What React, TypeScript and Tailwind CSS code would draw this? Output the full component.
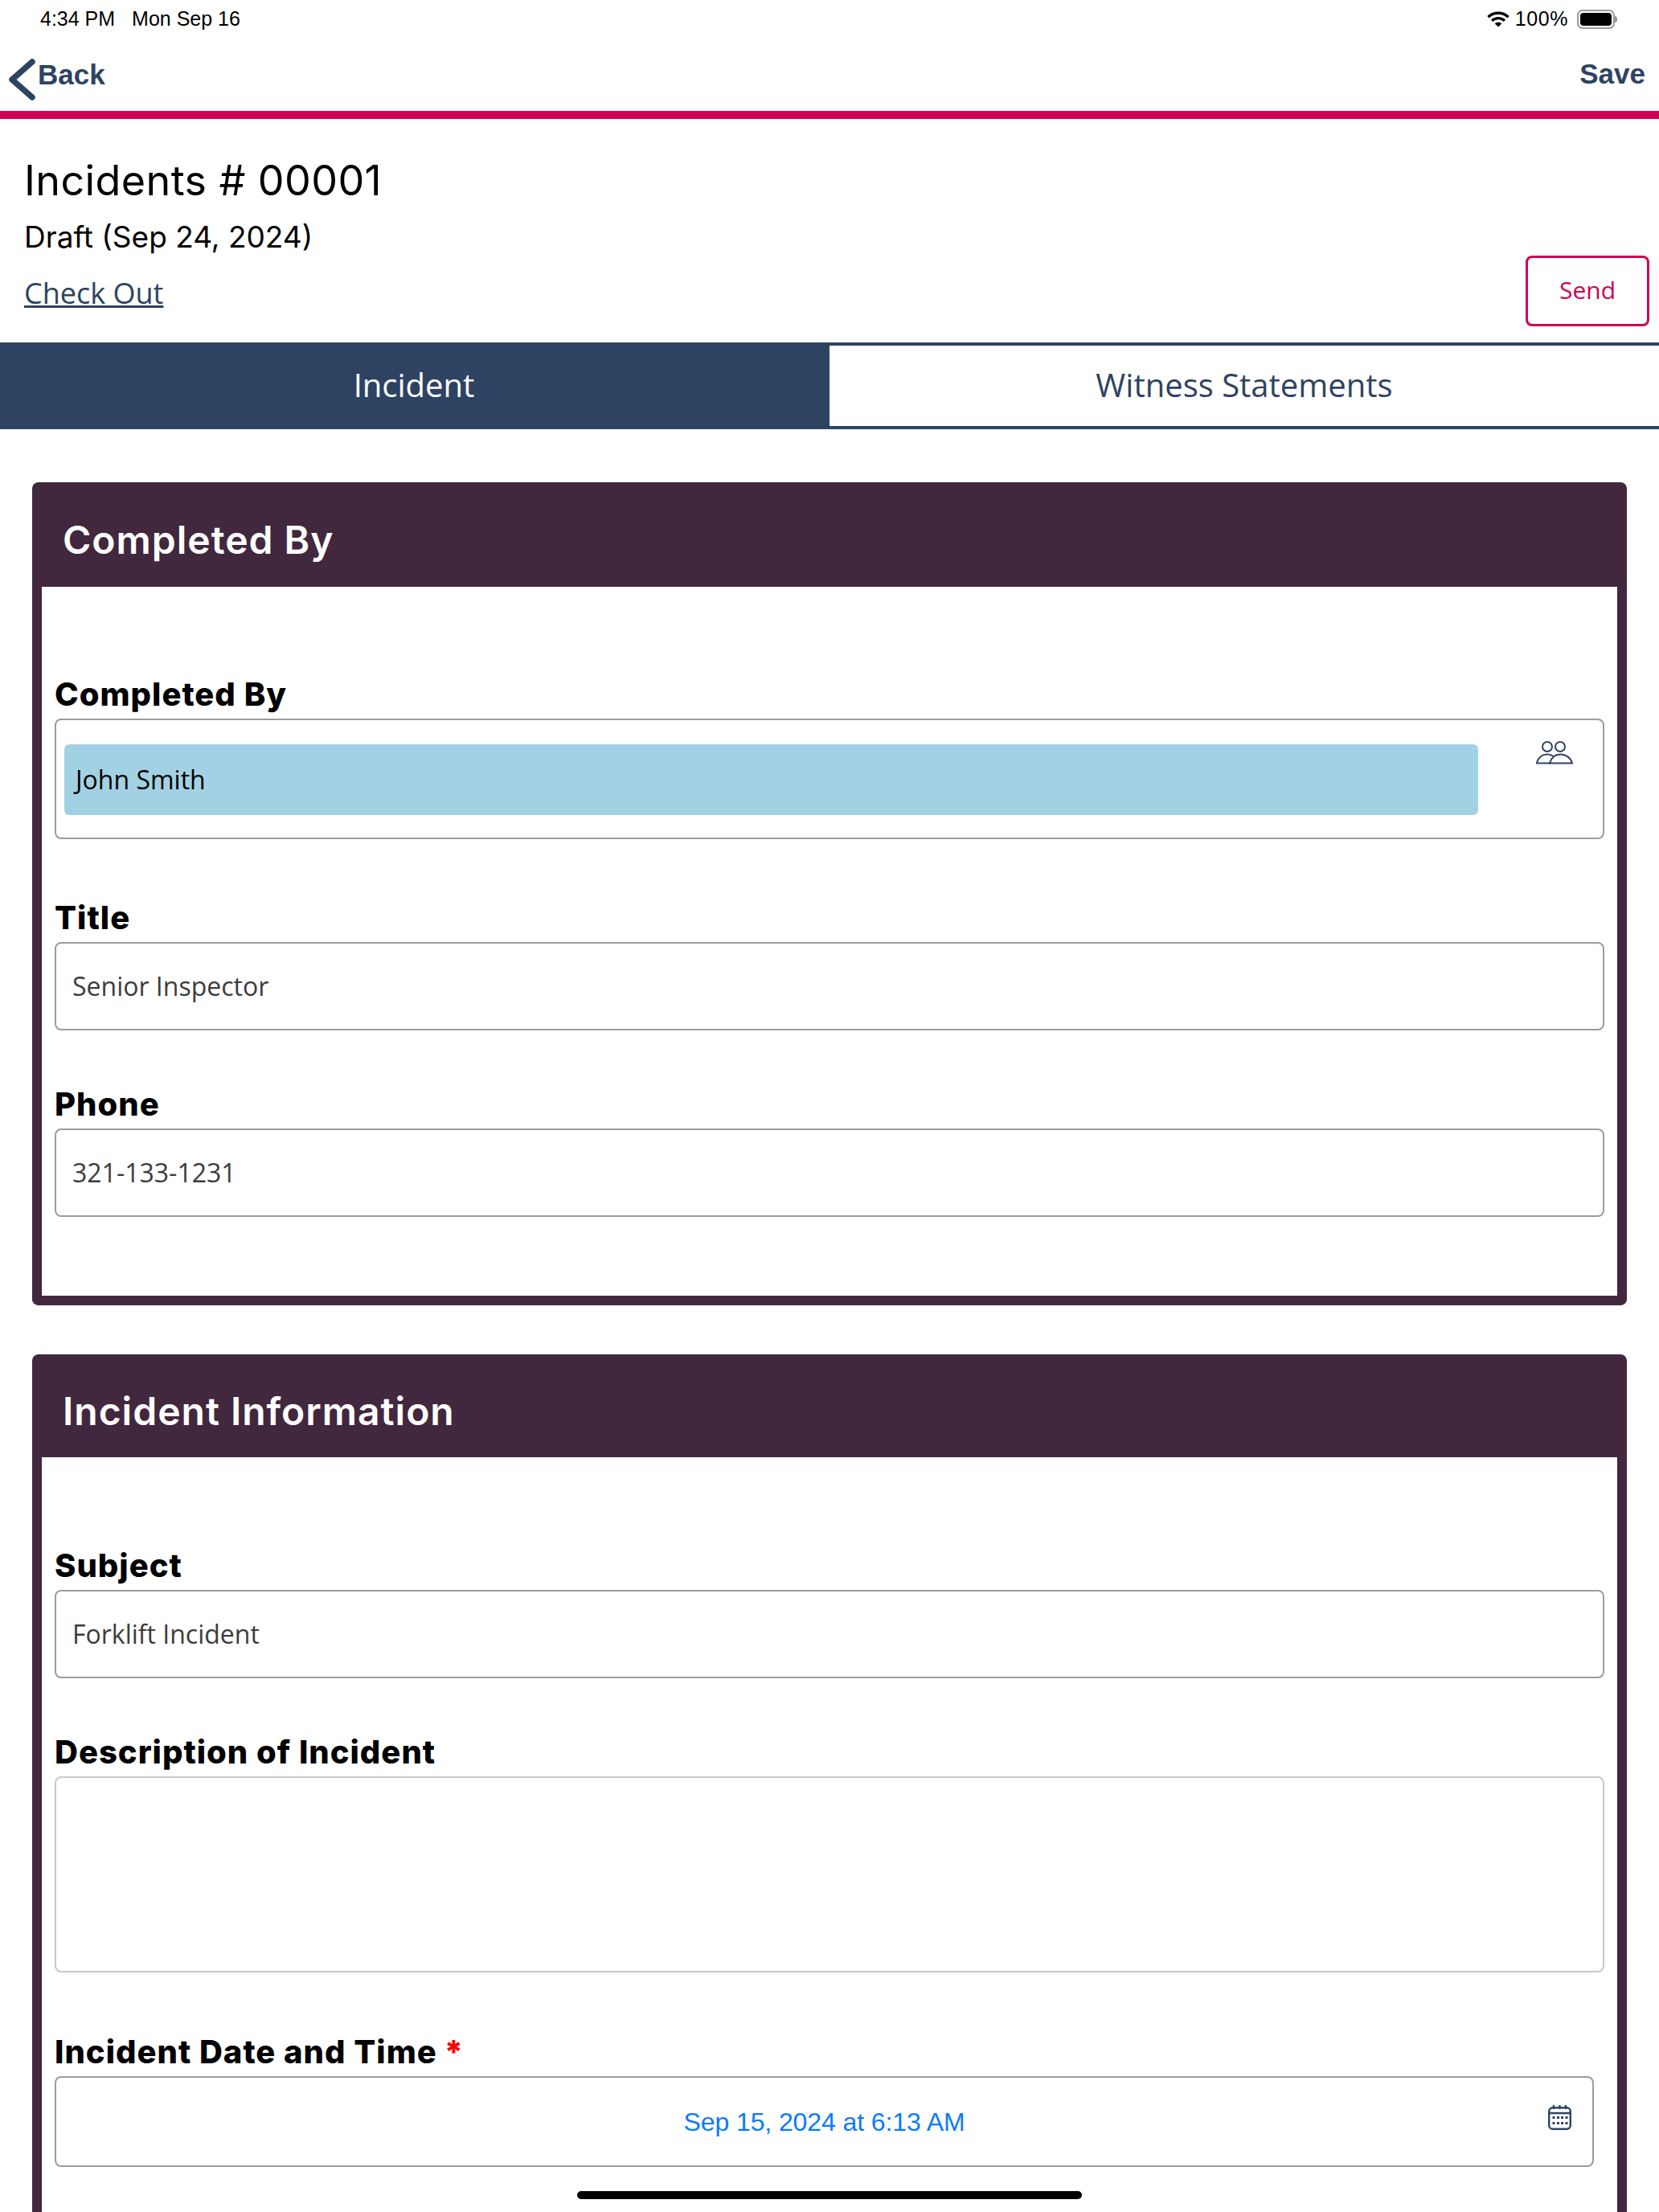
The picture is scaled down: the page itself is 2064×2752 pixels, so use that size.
const heading = "font-['Inter','Noto_Sans',sans-serif]"
const body = "font-['Open_Sans','Noto_Sans',sans-serif]"
const system = "font-['Liberation_Sans','Arial',sans-serif]"

function WifiIcon() {
  return (
    <svg width="28" height="20" viewBox="0 0 28 20" fill="none" stroke="#000" strokeWidth="3.4">
      <path d="M1.5 7.2C8.5 .6 19.5 .6 26.5 7.2" />
      <path d="M6 11.8C10.6 7.6 17.4 7.6 22 11.8" />
      <path d="M14 19.5 9.6 15.3C12 13.2 16 13.2 18.4 15.3Z" fill="#000" stroke="none" />
    </svg>
  )
}

function BatteryIcon() {
  return (
    <div className="flex items-center">
      <div className="w-[47px] h-[24px] rounded-[7px] border-2 border-[#9a9a9a] p-[2px]">
        <div className="w-full h-full rounded-[4px] bg-black" />
      </div>
      <div className="w-[3px] h-[8px] rounded-r-sm bg-[#9a9a9a]" />
    </div>
  )
}

function PeopleIcon() {
  return (
    <svg width="46" height="29" viewBox="0 0 46 29" fill="none" stroke="#2e4362" strokeWidth="2">
      <circle cx="14" cy="7" r="6" />
      <circle cx="30" cy="7" r="6" />
      <path d="M1 27C3 20 8 16.5 14 16.5C17 16.5 19.5 17.3 21.5 19" />
      <path d="M17 27.5C19 20.5 24 16.5 30.5 16.5C37 16.5 43 20.5 45 27.5Z" />
      <path d="M0 27.5H18" />
    </svg>
  )
}

function CalendarIcon() {
  return (
    <svg width="29" height="31" viewBox="0 0 29 31" fill="none" stroke="#2e4362" strokeWidth="2.4">
      <rect x="1.2" y="3.2" width="26.6" height="26.6" rx="4.5" />
      <path d="M1.2 10H27.8M7 0V5M14.5 0V5M22 0V5" />
      <g fill="#2e4362" stroke="none">
        <rect x="5.5" y="14" width="3" height="3" />
        <rect x="11" y="14" width="3" height="3" />
        <rect x="16" y="14" width="3" height="3" />
        <rect x="21.5" y="14" width="3" height="3" />
        <rect x="5.5" y="21" width="3" height="3" />
        <rect x="11" y="21" width="3" height="3" />
        <rect x="16" y="21" width="3" height="3" />
        <rect x="21.5" y="21" width="3" height="3" />
      </g>
    </svg>
  )
}

function Label({ children, className = "" }: { children: React.ReactNode; className?: string }) {
  return (
    <div className={`h-[48px] mb-[6px] flex items-center text-[40px] font-extrabold text-black tracking-[1px] ${heading} ${className}`}>
      {children}
    </div>
  )
}

function TextBox({ value }: { value: string }) {
  return (
    <div className={`h-[110px] flex items-center pl-[20px] border-2 border-[#9c9c9c] rounded-lg text-[32px] text-[#3c3c3c] ${body}`}>
      {value}
    </div>
  )
}

function Card({ title, headerClass, children, className = "" }: { title: string; headerClass: string; children: React.ReactNode; className?: string }) {
  return (
    <section className={`mx-[40px] rounded-lg border-x-[12px] border-b-[12px] border-[#41283e] bg-[#41283e] ${className}`}>
      <h2 className={`pl-[26px] pt-[14px] flex items-center text-[48px] font-semibold tracking-[1px] text-white ${heading} ${headerClass}`}>{title}</h2>
      <div className="bg-white px-[16px]">{children}</div>
    </section>
  )
}

export default function App() {
  return (
    <div className="relative w-[2064px] h-[2752px] overflow-hidden bg-white">
      <div className={`h-[46px] pt-[2px] flex items-center pl-[50px] pr-[52px] text-[25px] text-black ${system}`}>
        <span>4:34 PM</span>
        <span className="ml-[21px]">Mon Sep 16</span>
        <div className="ml-auto flex items-center">
          <WifiIcon />
          <span className="ml-[7px] mr-[11px] tracking-[0.6px]">100%</span>
          <BatteryIcon />
        </div>
      </div>

      <div className={`h-[92px] flex items-start justify-between pl-[11px] pr-[17px] text-[35px] font-bold text-[#2e4362] ${system}`}>
        <div className="flex items-start">
          <svg className="mt-[27px]" width="33" height="52" viewBox="0 0 33 52" fill="none" stroke="#2e4362" strokeWidth="7.5" strokeLinecap="round" strokeLinejoin="round">
            <path d="M29 4 4 26 29 48" />
          </svg>
          <span className="ml-[3px] mt-[21px]">Back</span>
        </div>
        <span className="mt-[20px]">Save</span>
      </div>
      <div className="h-[10px] bg-[#d10055]" />

      <div className="h-[278px] flex items-end justify-between pl-[30px] pr-[12px] pb-[20px]">
        <div className="self-start pt-[47px]">
          <h1 className={`text-[52px] leading-[60px] tracking-[0.4px] text-black ${heading}`}>Incidents # 00001</h1>
          <p className={`mt-[16px] text-[37px] leading-[48px] text-black ${heading}`}>Draft (Sep 24, 2024)</p>
          <a className={`mt-[22px] block text-[36px] leading-[48px] text-[#2e4362] underline ${body}`}>Check Out</a>
        </div>
        <button className={`w-[154px] h-[88px] pb-[4px] rounded-lg border-[3px] border-[#d10055] text-[30px] text-[#d10055] ${body}`}>Send</button>
      </div>

      <div className={`flex h-[108px] text-[40px] ${body}`}>
        <div className="w-[1032px] pb-[3px] pr-[2px] flex items-center justify-center bg-[#2e4362] text-white">Incident</div>
        <div className="flex-1 pb-[3px] flex items-center justify-center border-y-4 border-[#2e4362] text-[#2e4362]">Witness Statements</div>
      </div>

      <Card title="Completed By" headerClass="h-[130px]" className="mt-[66px]">
        <div className="pt-[110px] pb-[98px]">
          <Label>Completed By</Label>
          <div className="h-[150px] flex items-start border-2 border-[#9c9c9c] rounded-lg pl-[10px]">
            <div className={`mt-[30px] w-[1759px] h-[88px] flex items-center pl-[14px] rounded-md bg-[#a3d1e4] text-[32px] text-black ${body}`}>John Smith</div>
            <div className="ml-[72px] mt-[26px]"><PeopleIcon /></div>
          </div>
          <Label className="mt-[74px]">Title</Label>
          <TextBox value="Senior Inspector" />
          <Label className="mt-[68px]">Phone</Label>
          <TextBox value="321-133-1231" />
        </div>
      </Card>

      <Card title="Incident Information" headerClass="h-[128px]" className="mt-[61px]">
        <div className="pt-[111px] pb-[200px]">
          <Label>Subject</Label>
          <TextBox value="Forklift Incident" />
          <Label className="mt-[68px]">Description of Incident</Label>
          <div className="h-[244px] border-2 border-[#c8c8c8] rounded-lg" />
          <Label className="mt-[75px]">
            Incident Date and Time
            <span className="ml-[9px] text-[#ff0000]">*</span>
          </Label>
          <div className="relative w-[1915px] h-[113px] flex items-center justify-center border-2 border-[#9c9c9c] rounded-lg">
            <span className={`text-[32px] tracking-[-0.1px] text-[#0a7aff] ${system}`}>Sep 15, 2024 at 6:13 AM</span>
            <div className="absolute right-[26px] top-[34px]"><CalendarIcon /></div>
          </div>
        </div>
      </Card>

      <div className="absolute left-[718px] top-[2726px] w-[628px] h-[10px] rounded-full bg-black" />
    </div>
  )
}
